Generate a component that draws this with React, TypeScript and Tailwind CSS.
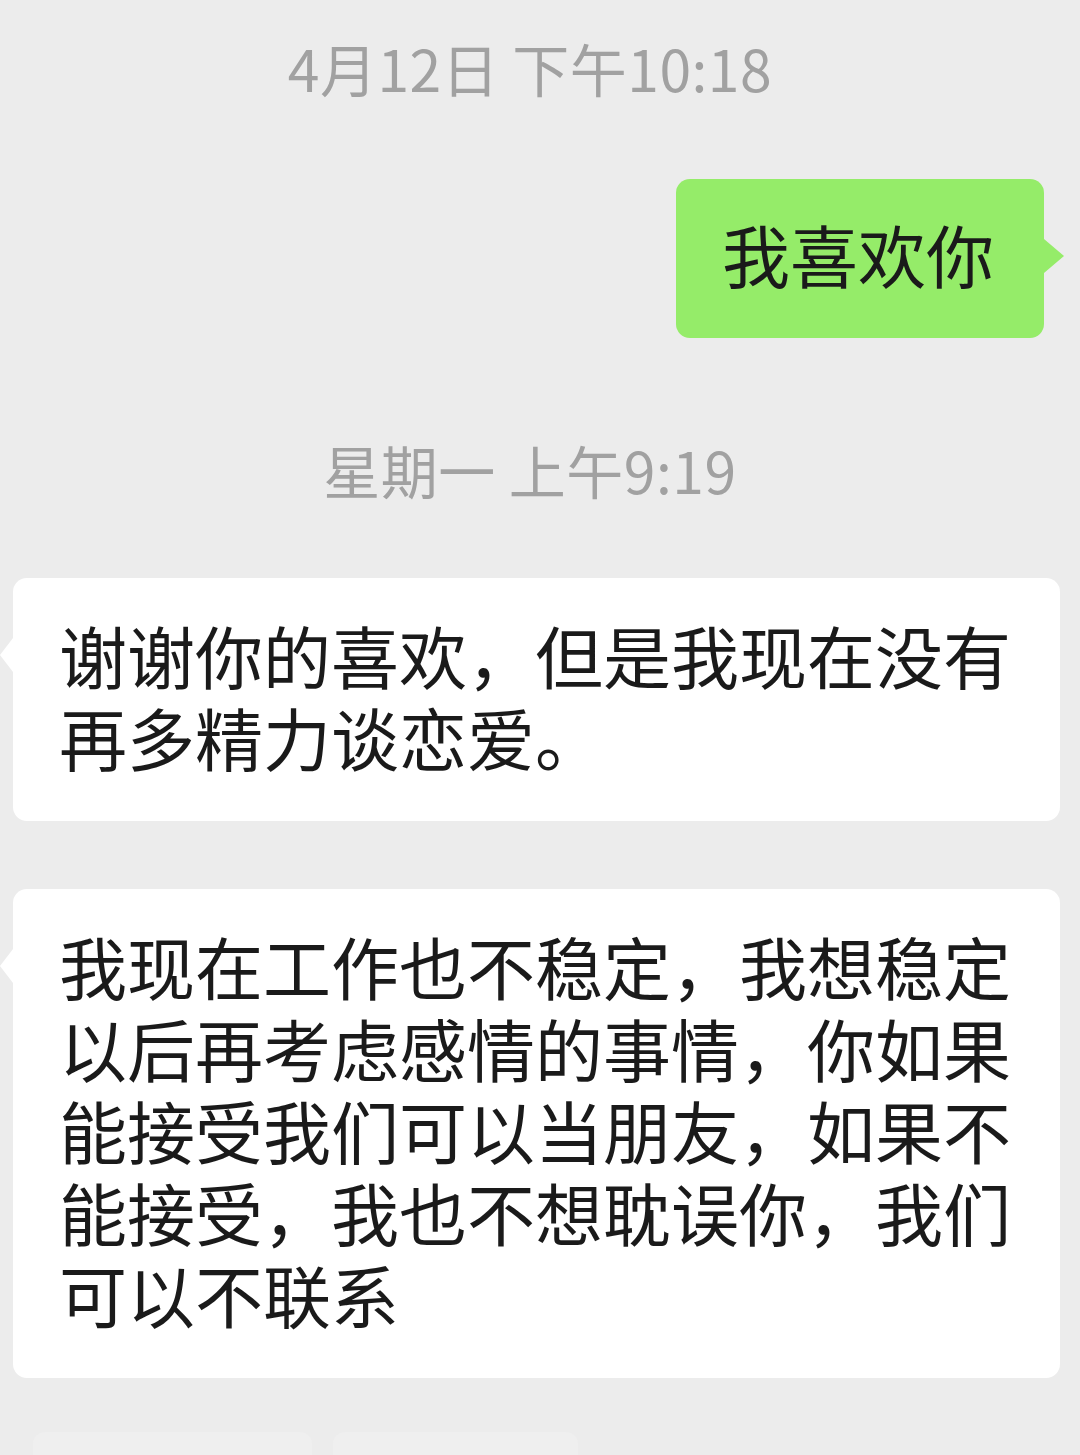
import React from "react";

const font = { fontFamily: '"Noto Sans CJK SC", "Noto Sans", sans-serif' };

type Side = "left" | "right";

function Bubble({ side, lines }: { side: Side; lines: string[] }) {
  const isMine = side === "right";
  return (
    <div
      className={`relative rounded-[14px] pl-[46px] text-[68px] leading-[82px] text-[#1a1a1a] ${
        isMine ? "bg-[#95ec69] pr-[50px] pt-[34px] pb-[43px]" : "bg-white pr-[50px] pt-[36px] pb-[43px]"
      }`}
    >
      {isMine ? (
        <div className="absolute right-[-20px] top-[60px] h-0 w-0 border-y-[17px] border-l-[20px] border-y-transparent border-l-[#95ec69]" />
      ) : (
        <div className="absolute left-[-13px] top-[60px] h-0 w-0 border-y-[17px] border-r-[13px] border-y-transparent border-r-white" />
      )}
      {lines.map((line) => (
        <div key={line} className="whitespace-nowrap">
          {line}
        </div>
      ))}
    </div>
  );
}

function Timestamp({ parts }: { parts: string[] }) {
  return (
    <div className="flex justify-center gap-[13px] pr-[20px] text-[57px] leading-[73px] text-[#a1a1a1]">
      {parts.map((p) => (
        <span key={p} className="tracking-[0.5px]">
          {p}
        </span>
      ))}
    </div>
  );
}

export default function App() {
  return (
    <div
      className="flex h-[1455px] w-[1080px] flex-col overflow-hidden bg-[#ececec] pt-[31px]"
      style={font}
    >
      <Timestamp parts={["4月12日", "下午10:18"]} />

      <div className="mt-[75px] flex justify-end pr-[36px]">
        <Bubble side="right" lines={["我喜欢你"]} />
      </div>

      <div className="mt-[95px]">
        <Timestamp parts={["星期一", "上午9:19"]} />
      </div>

      <div className="mt-[72px] pl-[13px] pr-[20px]">
        <Bubble
          side="left"
          lines={["谢谢你的喜欢，但是我现在没有", "再多精力谈恋爱。"]}
        />
      </div>

      <div className="mt-[68px] pl-[13px] pr-[20px]">
        <Bubble
          side="left"
          lines={[
            "我现在工作也不稳定，我想稳定",
            "以后再考虑感情的事情，你如果",
            "能接受我们可以当朋友，如果不",
            "能接受，我也不想耽误你，我们",
            "可以不联系",
          ]}
        />
      </div>

      <div className="mt-[54px] flex gap-[21px] pl-[33px]">
        <div className="h-[40px] w-[279px] rounded-t-[12px] bg-[#efefef]" />
        <div className="h-[40px] w-[245px] rounded-t-[12px] bg-[#efefef]" />
      </div>
    </div>
  );
}
